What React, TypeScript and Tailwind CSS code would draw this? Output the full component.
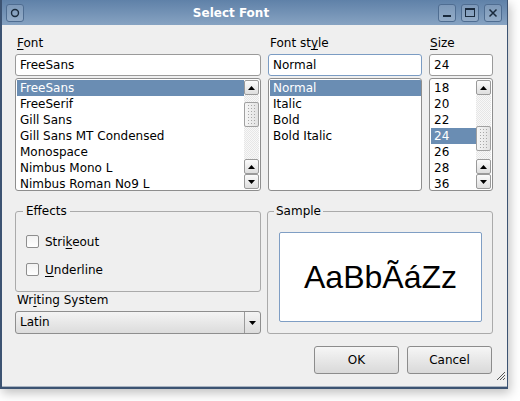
import React from 'react';

const fontNames = [
  'FreeSans',
  'FreeSerif',
  'Gill Sans',
  'Gill Sans MT Condensed',
  'Monospace',
  'Nimbus Mono L',
  'Nimbus Roman No9 L',
];
const styles = ['Normal', 'Italic', 'Bold', 'Bold Italic'];
const sizes = ['18', '20', '22', '24', '26', '28', '36'];

function Arrow({ down }: { down?: boolean }) {
  return (
    <svg width="7" height="4" viewBox="0 0 7 4">
      {down ? <polygon points="0,0 7,0 3.5,4" fill="#000" /> : <polygon points="0,4 7,4 3.5,0" fill="#000" />}
    </svg>
  );
}

function ArrowButton({ down }: { down?: boolean }) {
  return (
    <div className="h-[15px] w-full flex items-center justify-center rounded-[2px] border border-[#9a9a9a] bg-linear-to-b from-[#fbfbfb] to-[#dedede]">
      <Arrow down={down} />
    </div>
  );
}

function Grip() {
  const dots = [];
  for (let r = 0; r < 7; r++) for (let c = 0; c < 3; c++) dots.push(<rect key={r + '-' + c} x={c * 3} y={r * 3} width="1" height="1" fill="#a8a8a8" />);
  return (
    <svg width="8" height="20" viewBox="0 0 8 20">
      {dots}
    </svg>
  );
}

function ScrollBar({ handleTop }: { handleTop: number }) {
  return (
    <div className="w-[16px] h-full flex flex-col py-[1px] pr-[1px]">
      <ArrowButton />
      <div className="flex-1 flex flex-col bg-[conic-gradient(#e6e6e6_25%,#f8f8f8_0_50%,#e6e6e6_0_75%,#f8f8f8_0)] bg-size-[2px_2px]">
        <div
          className="h-[25px] w-full rounded-[2px] border border-[#a0a0a0] bg-linear-to-r from-[#f6f6f6] to-[#e2e2e2] flex items-center justify-center"
          style={{ marginTop: handleTop }}
        >
          <Grip />
        </div>
      </div>
      <ArrowButton />
      <ArrowButton down />
    </div>
  );
}

function ListBox({ items, selected, scroll, handleTop }: { items: string[]; selected: number; scroll?: boolean; handleTop?: number }) {
  return (
    <div className="h-[113px] flex rounded-[3px] border border-[#8e8e8e] bg-white overflow-hidden">
      <div className="flex-1 flex flex-col pt-[1px] pl-[1px]">
        {items.map((it, i) => (
          <div
            key={it}
            className={
              'h-[16px] leading-[16px] pl-[3px] ' + (i === selected ? 'bg-[#6a8db3] text-white' : 'text-black')
            }
          >
            {it}
          </div>
        ))}
      </div>
      {scroll && <ScrollBar handleTop={handleTop ?? 0} />}
    </div>
  );
}

function TextInput({ value, focus }: { value: string; focus?: boolean }) {
  return (
    <div
      className={
        'h-[22px] leading-[20px] pl-[4px] rounded-[3px] bg-white border ' +
        (focus ? 'border-[#7b9cc3]' : 'border-[#9a9a9a]')
      }
    >
      {value}
    </div>
  );
}

function CheckRow({ children }: { children: React.ReactNode }) {
  return (
    <div className="flex items-center h-[13px] gap-[6px]">
      <div className="w-[13px] h-[13px] rounded-[2px] border border-[#8e8e8e] bg-linear-to-b from-[#f2f2f2] to-white" />
      <span className="leading-[14px]">{children}</span>
    </div>
  );
}

function Button({ children }: { children: React.ReactNode }) {
  return (
    <div className="w-[85px] h-[28px] flex items-center justify-center rounded-[3px] border border-[#8c8c8c] bg-linear-to-b from-[#f6f6f6] to-[#d9d9d9]">
      {children}
    </div>
  );
}

function TitleButton({ children }: { children: React.ReactNode }) {
  return (
    <div className="w-[18px] h-[18px] rounded-[3px] border border-[#4f6d91] bg-white/15 flex items-center justify-center">
      {children}
    </div>
  );
}

export default function App() {
  return (
    <div className="w-[520px] h-[401px] bg-white" style={{ fontFamily: '"DejaVu Sans", sans-serif' }}>
      <div className="w-[508px] h-[389px] flex flex-col border-l-2 border-r border-b-2 border-[#3c5372] shadow-[2px_4px_10px_rgba(0,0,0,0.25)] text-[12px] text-black">
        {/* Title bar */}
        <div className="h-[25px] flex items-center pl-[4px] pr-[5px] bg-linear-to-b from-[#5f81a8] to-[#87a3c2]">
          <TitleButton>
            <svg width="10" height="10" viewBox="0 0 10 10">
              <circle cx="5" cy="5" r="3.5" fill="none" stroke="#1a2a3c" strokeWidth="1.4" />
            </svg>
          </TitleButton>
          <div className="flex-1 text-center text-white font-bold text-[12px]">Select Font</div>
          <div className="flex gap-[5px]">
            <TitleButton>
              <div className="w-[8px] h-[2px] bg-[#1a2a3c] mt-[7px]" />
            </TitleButton>
            <TitleButton>
              <div className="w-[10px] h-[9px] border-[1.5px] border-[#1a2a3c] border-t-2" />
            </TitleButton>
            <TitleButton>
              <svg width="10" height="10" viewBox="0 0 10 10">
                <path d="M1.5 1.5 L8.5 8.5 M8.5 1.5 L1.5 8.5" stroke="#1a2a3c" strokeWidth="1.5" />
              </svg>
            </TitleButton>
          </div>
        </div>

        {/* Content */}
        <div className="flex-1 bg-[#efefef] pt-[11px] pl-[13px] pr-[14px] flex flex-col relative border-b border-[#a9b4c2]">
          <div className="grid grid-cols-[246px_154px_64px] gap-x-[7px]">
            <div className="flex flex-col">
              <div className="h-[14px] leading-[14px] pl-[2px]">
                <span className="underline underline-offset-2">F</span>ont
              </div>
              <div className="mt-[4px]">
                <TextInput value="FreeSans" />
              </div>
              <div className="mt-[2px]">
                <ListBox items={fontNames} selected={0} scroll handleTop={7} />
              </div>
            </div>
            <div className="flex flex-col">
              <div className="h-[14px] leading-[14px] pl-[2px]">
                Font st<span className="underline underline-offset-2">y</span>le
              </div>
              <div className="mt-[4px]">
                <TextInput value="Normal" focus />
              </div>
              <div className="mt-[2px]">
                <ListBox items={styles} selected={0} />
              </div>
            </div>
            <div className="flex flex-col">
              <div className="h-[14px] leading-[14px] pl-[1px]">
                <span className="underline underline-offset-2">S</span>ize
              </div>
              <div className="mt-[4px]">
                <TextInput value="24" />
              </div>
              <div className="mt-[2px]">
                <ListBox items={sizes} selected={3} scroll handleTop={31} />
              </div>
            </div>
          </div>

          <div className="mt-[13px] grid grid-cols-[246px_226px] gap-x-[6px]">
            <div className="flex flex-col">
              <fieldset className="h-[88px] rounded-[3px] border border-[#aaaaaa] pl-[10px]">
                <legend className="ml-[-3px] px-[3px] leading-[14px]">Effects</legend>
                <div className="pt-[17px] flex flex-col gap-[15px]">
                  <CheckRow>
                    Stri<span className="underline underline-offset-2">k</span>eout
                  </CheckRow>
                  <CheckRow>
                    <span className="underline underline-offset-2">U</span>nderline
                  </CheckRow>
                </div>
              </fieldset>
              <div className="h-[14px] leading-[14px] mt-[1px] pl-[2px]">
                Wr<span className="underline underline-offset-2">i</span>ting System
              </div>
              <div className="mt-[4px] h-[23px] flex rounded-[3px] border border-[#8e8e8e] bg-linear-to-b from-[#f4f4f4] to-[#dcdcdc]">
                <div className="flex-1 pl-[4px] leading-[21px]">Latin</div>
                <div className="w-[16px] border-l border-[#9a9a9a] flex items-center justify-center">
                  <Arrow down />
                </div>
              </div>
            </div>
            <fieldset className="h-[130px] rounded-[3px] border border-[#aaaaaa] pl-[11px]">
              <legend className="ml-[-5px] px-[2px] leading-[14px]">Sample</legend>
              <div className="mt-[14px] w-[203px] h-[90px] bg-white border border-[#7f9ec4] rounded-[2px] flex items-center justify-center">
                <span className="text-[32px]" style={{ fontFamily: '"Liberation Sans", Arial, sans-serif' }}>
                  AaBbÃáZz
                </span>
              </div>
            </fieldset>
          </div>

          <div className="mt-[12px] flex justify-end gap-[8px] pr-[1px]">
            <Button>OK</Button>
            <Button>Cancel</Button>
          </div>

          <svg className="absolute right-[1px] bottom-[5px]" width="10" height="10" viewBox="0 0 10 10">
            <path d="M9 1 L1 9 M9 4 L4 9 M9 7 L7 9" stroke="#555" strokeWidth="1" />
          </svg>
        </div>
      </div>
    </div>
  );
}
